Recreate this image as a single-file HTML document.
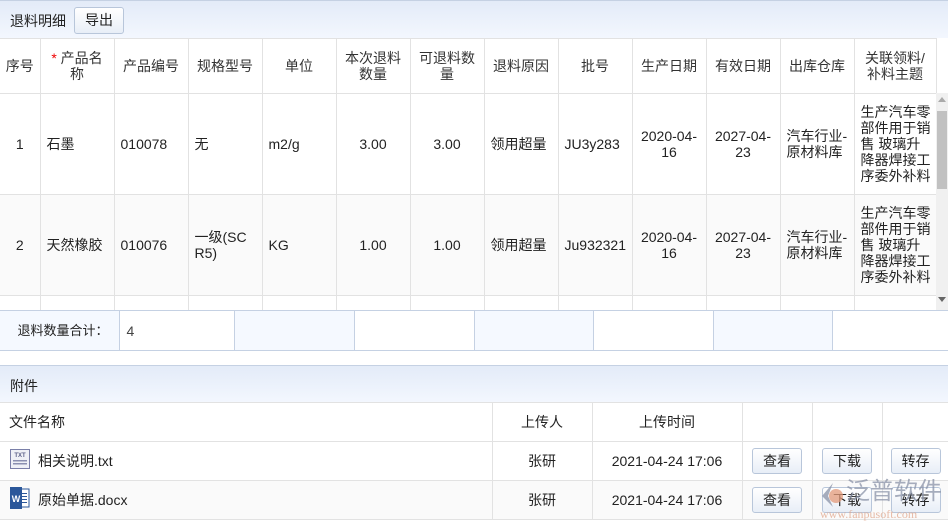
<!DOCTYPE html>
<html><head><meta charset="utf-8">
<style>
*{margin:0;padding:0;box-sizing:border-box}
body{width:948px;height:521px;overflow:hidden;background:#fff;font-family:"Liberation Sans","Noto Sans CJK SC",sans-serif;font-size:14px;color:#222;position:relative}
.bar{position:absolute;left:0;width:948px;background:linear-gradient(#e3ebf8,#f3f7fe);border-top:1px solid #c5d1e3}
.btn{border:1px solid #b8c6da;border-radius:3px;background:linear-gradient(#fff,#e8eef7);text-align:center;font-size:14px}
table{border-collapse:collapse;table-layout:fixed;position:absolute}
td{border:1px solid #e2e2e2;vertical-align:middle;line-height:16px;word-break:break-all}
.c{text-align:center;padding:0 5px}
.l{padding:0 5px 0 6px}
.b{position:relative;margin:0 auto;width:50px;height:26px;line-height:24px}
</style></head><body>
<div class="bar" style="top:0;height:38px"><span style="position:absolute;left:10px;top:10px">退料明细</span>
<div class="btn" style="position:absolute;left:74px;top:6px;width:50px;height:27px;line-height:25px">导出</div></div>
<div style="position:absolute;left:0;top:38px;width:948px;height:272px;overflow:hidden;background:#fff">
<table style="left:0;top:0;width:936px">
<colgroup><col style="width:40px"><col style="width:74px"><col style="width:74px"><col style="width:74px"><col style="width:74px"><col style="width:74px"><col style="width:74px"><col style="width:74px"><col style="width:74px"><col style="width:74px"><col style="width:74px"><col style="width:74px"><col style="width:82px"></colgroup>
<tr style="height:55px;color:#333"><td class="c" style="border-left:none;padding:0">序号</td><td class="c"><span style="color:#e00">*</span> 产品名称</td><td class="c">产品编号</td><td class="c">规格型号</td><td class="c">单位</td><td class="c">本次退料数量</td><td class="c">可退料数量</td><td class="c">退料原因</td><td class="c">批号</td><td class="c">生产日期</td><td class="c">有效日期</td><td class="c">出库仓库</td><td class="c">关联领料/补料主题</td></tr>
<tr style="height:101px"><td class="c" style="border-left:none;padding:0">1</td><td class="l">石墨</td><td class="l">010078</td><td class="l">无</td><td class="l">m2/g</td><td class="c">3.00</td><td class="c">3.00</td><td class="l">领用超量</td><td class="l">JU3y283</td><td class="c">2020-04-16</td><td class="c">2027-04-23</td><td class="l">汽车行业-原材料库</td><td class="l">生产汽车零部件用于销售 玻璃升降器焊接工序委外补料</td></tr>
<tr style="height:101px;background:#fafafa"><td class="c" style="border-left:none;padding:0">2</td><td class="l">天然橡胶</td><td class="l">010076</td><td class="l">一级(SCR5)</td><td class="l">KG</td><td class="c">1.00</td><td class="c">1.00</td><td class="l">领用超量</td><td class="l">Ju932321</td><td class="c">2020-04-16</td><td class="c">2027-04-23</td><td class="l">汽车行业-原材料库</td><td class="l">生产汽车零部件用于销售 玻璃升降器焊接工序委外补料</td></tr>
<tr style="height:40px"><td style="border-left:none"></td><td></td><td></td><td></td><td></td><td></td><td></td><td></td><td></td><td></td><td></td><td></td><td></td></tr>
</table></div>
<div style="position:absolute;left:936px;top:93px;width:12px;height:217px;background:#f0f0f0">
<div style="position:absolute;left:2px;top:4px;border:4px solid transparent;border-bottom:5px solid #aaa;border-top:none"></div>
<div style="position:absolute;left:1px;top:18px;width:10px;height:78px;background:#c1c1c1"></div>
<div style="position:absolute;left:2px;top:204px;border:4px solid transparent;border-top:5px solid #666;border-bottom:none"></div></div>
<table style="left:0;top:310px;width:948px;height:41px;border-top:1px solid #c5d1e3;border-bottom:1px solid #c5d1e3">
<colgroup><col style="width:119px"><col style="width:115px"><col style="width:120px"><col style="width:120px"><col style="width:119px"><col style="width:120px"><col style="width:119px"><col style="width:116px"></colgroup>
<tr><td style="border:none;border-right:1px solid #c5d1e3;background:#f5f9ff;text-align:right;padding-right:10px;font-size:13px;white-space:nowrap">退料数量合计：</td><td style="border:none;border-right:1px solid #c5d1e3;padding-left:7px;color:#444">4</td><td style="border:none;border-right:1px solid #c5d1e3;background:#f5f9ff"></td><td style="border:none;border-right:1px solid #c5d1e3"></td><td style="border:none;border-right:1px solid #c5d1e3;background:#f5f9ff"></td><td style="border:none;border-right:1px solid #c5d1e3"></td><td style="border:none;border-right:1px solid #c5d1e3;background:#f5f9ff"></td><td style="border:none"></td></tr></table>
<div class="bar" style="top:365px;height:37px"><span style="position:absolute;left:10px;top:10px">附件</span></div>
<table style="left:0;top:402px;width:949px">
<colgroup><col style="width:492px"><col style="width:100px"><col style="width:150px"><col style="width:70px"><col style="width:70px"><col style="width:67px"></colgroup>
<tr style="height:39px"><td style="border-left:none;padding-left:9px">文件名称</td><td class="c">上传人</td><td class="c">上传时间</td><td></td><td></td><td></td></tr>
<tr style="height:39px"><td style="border-left:none;padding-left:38px;position:relative">
<svg style="position:absolute;left:10px;top:7px" width="20" height="20" viewBox="0 0 20 20"><rect x="0.5" y="0.5" width="19" height="19" fill="#eef0f6" stroke="#7a7fa8"/><text x="10" y="8" font-size="6" text-anchor="middle" fill="#5a5f88" font-family="Liberation Sans" font-weight="bold">TXT</text><rect x="3" y="11" width="14" height="1.5" fill="#8a8fb0"/><rect x="3" y="14" width="14" height="1.5" fill="#8a8fb0"/></svg>相关说明.txt</td><td class="c">张研</td><td class="c">2021-04-24 17:06</td>
<td><div class="btn b">查看</div></td><td><div class="btn b">下载</div></td><td><div class="btn b">转存</div></td></tr>
<tr style="height:39px;background:#fafafa"><td style="border-left:none;padding-left:38px;position:relative">
<svg style="position:absolute;left:10px;top:6px" width="20" height="22" viewBox="0 0 20 22"><rect x="7" y="2" width="12" height="18" fill="#fff" stroke="#2b579a"/><rect x="9" y="6" width="8" height="1" fill="#2b579a"/><rect x="9" y="9" width="8" height="1" fill="#2b579a"/><rect x="9" y="12" width="8" height="1" fill="#2b579a"/><rect x="9" y="15" width="8" height="1" fill="#2b579a"/><rect x="0" y="0" width="12" height="22" fill="#2b579a"/><text x="6" y="15" font-size="9" text-anchor="middle" fill="#fff" font-family="Liberation Sans" font-weight="bold">W</text></svg>原始单据.docx</td><td class="c">张研</td><td class="c">2021-04-24 17:06</td>
<td><div class="btn b">查看</div></td><td><div class="btn b">下载</div></td><td><div class="btn b">转存</div></td></tr>
</table>
<div style="position:absolute;left:818px;top:478px;width:130px;height:43px;opacity:0.75;pointer-events:none;white-space:nowrap">
<svg style="position:absolute;left:2px;top:4px" width="26" height="26" viewBox="0 0 26 26"><path d="M13 1 L2 14 L13 25 L8 14 Z" fill="#8a93a8"/><circle cx="16" cy="14" r="7" fill="#e39a7a"/></svg>
<span style="position:absolute;left:28px;top:0;font-size:24px;line-height:28px;color:#8a93a8">泛普软件</span>
<span style="position:absolute;left:2px;top:29px;font-size:12px;color:#e0a58a;font-family:'Liberation Serif',serif">www.fanpusoft.com</span></div>
</body></html>
